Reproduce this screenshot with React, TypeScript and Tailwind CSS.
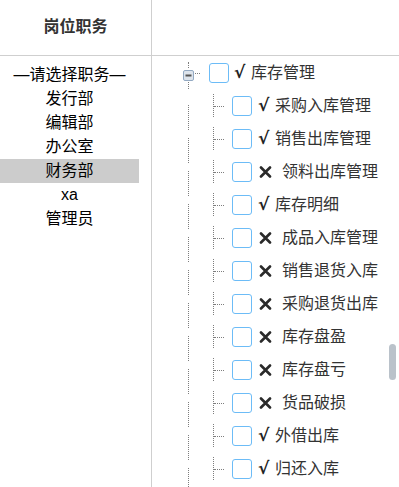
import React from "react";

const roles = ["—请选择职务—", "发行部", "编辑部", "办公室", "财务部", "xa", "管理员"];

type Item = { ok: boolean; label: string };
const items: Item[] = [
  { ok: true, label: "采购入库管理" },
  { ok: true, label: "销售出库管理" },
  { ok: false, label: "领料出库管理" },
  { ok: true, label: "库存明细" },
  { ok: false, label: "成品入库管理" },
  { ok: false, label: "销售退货入库" },
  { ok: false, label: "采购退货出库" },
  { ok: false, label: "库存盘盈" },
  { ok: false, label: "库存盘亏" },
  { ok: false, label: "货品破损" },
  { ok: true, label: "外借出库" },
  { ok: true, label: "归还入库" },
];

function Box() {
  return <div className="w-[20px] h-[20px] shrink-0 rounded-[3px] border border-[#6cbcf7] bg-white" />;
}

function Mark({ ok }: { ok: boolean }) {
  return ok ? (
    <span className="inline-block w-[17px] font-bold text-[#222] font-['DejaVu_Sans',sans-serif] text-[17px] leading-none">√</span>
  ) : (
    <span className="inline-flex items-center ml-[1px] w-[23px] h-[16px] text-[#222]">
      <svg width="13" height="12" viewBox="0 0 13 12">
        <path d="M2 1.5 L11 10.5 M11 1.5 L2 10.5" stroke="#2a2a2a" strokeWidth="2.6" strokeLinecap="round" />
      </svg>
    </span>
  );
}

export default function App() {
  return (
    <div className="relative flex w-[399px] h-[487px] overflow-hidden bg-white font-['Liberation_Sans','Noto_Sans_CJK_SC',sans-serif]">
      <div className="w-[152px] shrink-0 border-r border-[#cfcfcf] flex flex-col">
        <div className="h-[56px] border-b border-[#cfcfcf] flex items-center justify-center">
          <span className="font-bold text-[16px] text-[#333] pb-[1px]">岗位职务</span>
        </div>
        <div className="pt-[7px] w-[139px]">
          {roles.map((r) => (
            <div
              key={r}
              className={`h-[24px] leading-[24px] text-center text-[16px] text-black ${r === "财务部" ? "bg-[#cccccc]" : ""}`}
            >
              {r}
            </div>
          ))}
        </div>
      </div>
      <div className="flex-1 flex flex-col">
        <div className="h-[56px] border-b border-[#cfcfcf]" />
        <div className="text-[16px] text-[#333]">
          <div className="h-[33px] flex items-center">
            <div className="ml-[31px] w-[11px] h-[33px] flex flex-col items-center">
              <div className="mt-[6px] h-[6px] border-l border-dotted border-[#7d7d7d]" />
              <div className="flex items-center">
                <svg width="11" height="11" viewBox="0 0 11 11" className="mt-[2px]">
                  <rect x="0.5" y="0.5" width="10" height="10" rx="1.5" fill="#dde4ec" stroke="#93a9c2" />
                  <rect x="2.5" y="4.5" width="6" height="2" fill="#555" />
                </svg>
              </div>
              <div className="mt-[1px] h-[7px] border-l border-dotted border-[#7d7d7d]" />
            </div>
            <div className="w-[5px] mt-[1px] border-t border-dotted border-[#7d7d7d] ml-[1px]" />
            <div className="ml-[9px]">
              <Box />
            </div>
            <div className="ml-[5px] flex items-center">
              <Mark ok={true} />
              <span>库存管理</span>
            </div>
          </div>
          {items.map((it) => (
            <div key={it.label} className="h-[33px] flex items-start">
              <div className="ml-[36px] mt-[16px] h-[25px] border-l border-dotted border-[#7d7d7d]" />
              <div className="ml-[24px] mt-[5px] h-[23px] border-l border-dotted border-[#7d7d7d]" />
              <div className="mt-[17px] w-[10px] border-t border-dotted border-[#7d7d7d]" />
              <div className="ml-[8px] h-[33px] flex items-center">
                <Box />
                <div className="ml-[6px] flex items-center">
                  <Mark ok={it.ok} />
                  <span>{it.label}</span>
                </div>
              </div>
            </div>
          ))}
        </div>
      </div>
      <div className="absolute left-[389px] top-[344px] w-[7px] h-[36px] rounded-full bg-[#bac2ca]" />
    </div>
  );
}
